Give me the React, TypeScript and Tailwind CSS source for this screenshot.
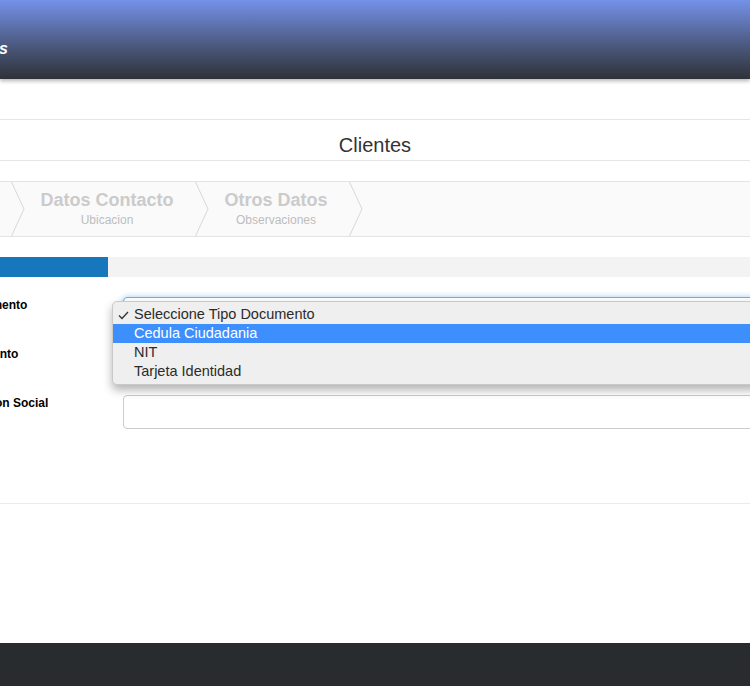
import { Fragment } from 'react'

const steps = [
  { title: 'Datos Basicos', sub: 'Identificacion', cls: '-ml-[159px] w-[170px]' },
  { title: 'Datos Contacto', sub: 'Ubicacion', cls: 'w-[170px]' },
  { title: 'Otros Datos', sub: 'Observaciones', cls: 'w-[140px]' },
]

const options = ['Seleccione Tipo Documento', 'Cedula Ciudadania', 'NIT', 'Tarjeta Identidad']

function Chevron() {
  return (
    <svg width="14" height="54" viewBox="0 0 14 54" className="shrink-0">
      <polyline points="0.5,0 13,27 0.5,54" fill="none" stroke="#d8d8d8" strokeWidth="1" />
    </svg>
  )
}

function Label({ text }: { text: string }) {
  return (
    <div className="-ml-[67px] w-[190px] shrink-0 pt-px text-[12px] leading-[14px] font-bold text-black whitespace-nowrap">
      {text}
    </div>
  )
}

export default function App() {
  return (
    <div className="relative min-h-[686px] overflow-hidden bg-white font-['Liberation_Sans',Arial,sans-serif]">
      {/* top bar */}
      <header className="relative z-10 h-[79px] bg-linear-to-b from-[#7592ea] to-[#2f3238] shadow-[0_2px_4px_rgba(0,0,0,0.3)]">
        <div className="flex w-[8px] justify-end pt-[40px]">
          <span className="whitespace-nowrap text-[16px] font-bold italic leading-[18px] text-white">
            Sistemas
          </span>
        </div>
      </header>

      {/* title */}
      <div className="mt-[40px] h-[42px] border-y border-[#e6e6e6] pt-[13px] text-center text-[20px] leading-[24px] text-[#333]">
        Clientes
      </div>

      {/* wizard steps */}
      <div className="mt-[20px] flex h-[56px] border-y border-[#e4e4e4] bg-[#fafafa]">
        {steps.map(s => (
          <Fragment key={s.title}>
            <div className={`${s.cls} shrink-0 pr-[6px] pt-[8px] text-center whitespace-nowrap`}>
              <div className="text-[18px] font-bold leading-[20px] text-[#cbcbcb]">{s.title}</div>
              <div className="mt-[3px] text-[12px] leading-[14px] text-[#bdbdbd]">{s.sub}</div>
            </div>
            <Chevron />
          </Fragment>
        ))}
      </div>

      {/* progress */}
      <div className="mt-[20px] h-[20px] bg-[#f3f3f3]">
        <div className="h-full w-[108px] bg-[#1777bd]" />
      </div>

      {/* form */}
      <div className="relative h-[227px] border-b border-[#ebebeb] pt-[20px]">
        <div className="flex h-[34px]">
          <Label text="Tipo Documento" />
          <div className="-mr-[20px] flex-1 rounded-[4px] border border-[#66afe9] shadow-[0_0_6px_rgba(102,175,233,0.6)]" />
        </div>
        <div className="mt-[15px] flex h-[34px]">
          <Label text="No Documento" />
          <div className="-mr-[20px] flex-1 rounded-[4px] border border-[#ccc]" />
        </div>
        <div className="mt-[15px] flex h-[34px]">
          <Label text="Nomb. Razon Social" />
          <div className="-mr-[20px] flex-1 rounded-[4px] border border-[#ccc]" />
        </div>

        {/* open select menu */}
        <div className="absolute left-[112px] top-[24px] -right-[20px] rounded-[5px] border border-[#c9c9c9] bg-[#efefef] py-[3px] shadow-[0_5px_10px_rgba(0,0,0,0.3)]">
          {options.map((o, i) => (
            <div
              key={o}
              className={`relative h-[19px] pl-[21px] text-[14.5px] leading-[19px] whitespace-nowrap ${
                i === 1 ? 'bg-[#3d8ffe] text-white' : 'text-[#2b2b2b]'
              }`}
            >
              {i === 0 && (
                <svg width="11" height="9" viewBox="0 0 11 9" className="absolute left-[5px] top-[6px]">
                  <polyline points="1,4.5 4,7.5 10,1" fill="none" stroke="#333" strokeWidth="1.3" />
                </svg>
              )}
              {o}
            </div>
          ))}
        </div>
      </div>

      <div className="h-[139px]" />

      <footer className="h-[43px] bg-[#292c2f]" />
    </div>
  )
}
